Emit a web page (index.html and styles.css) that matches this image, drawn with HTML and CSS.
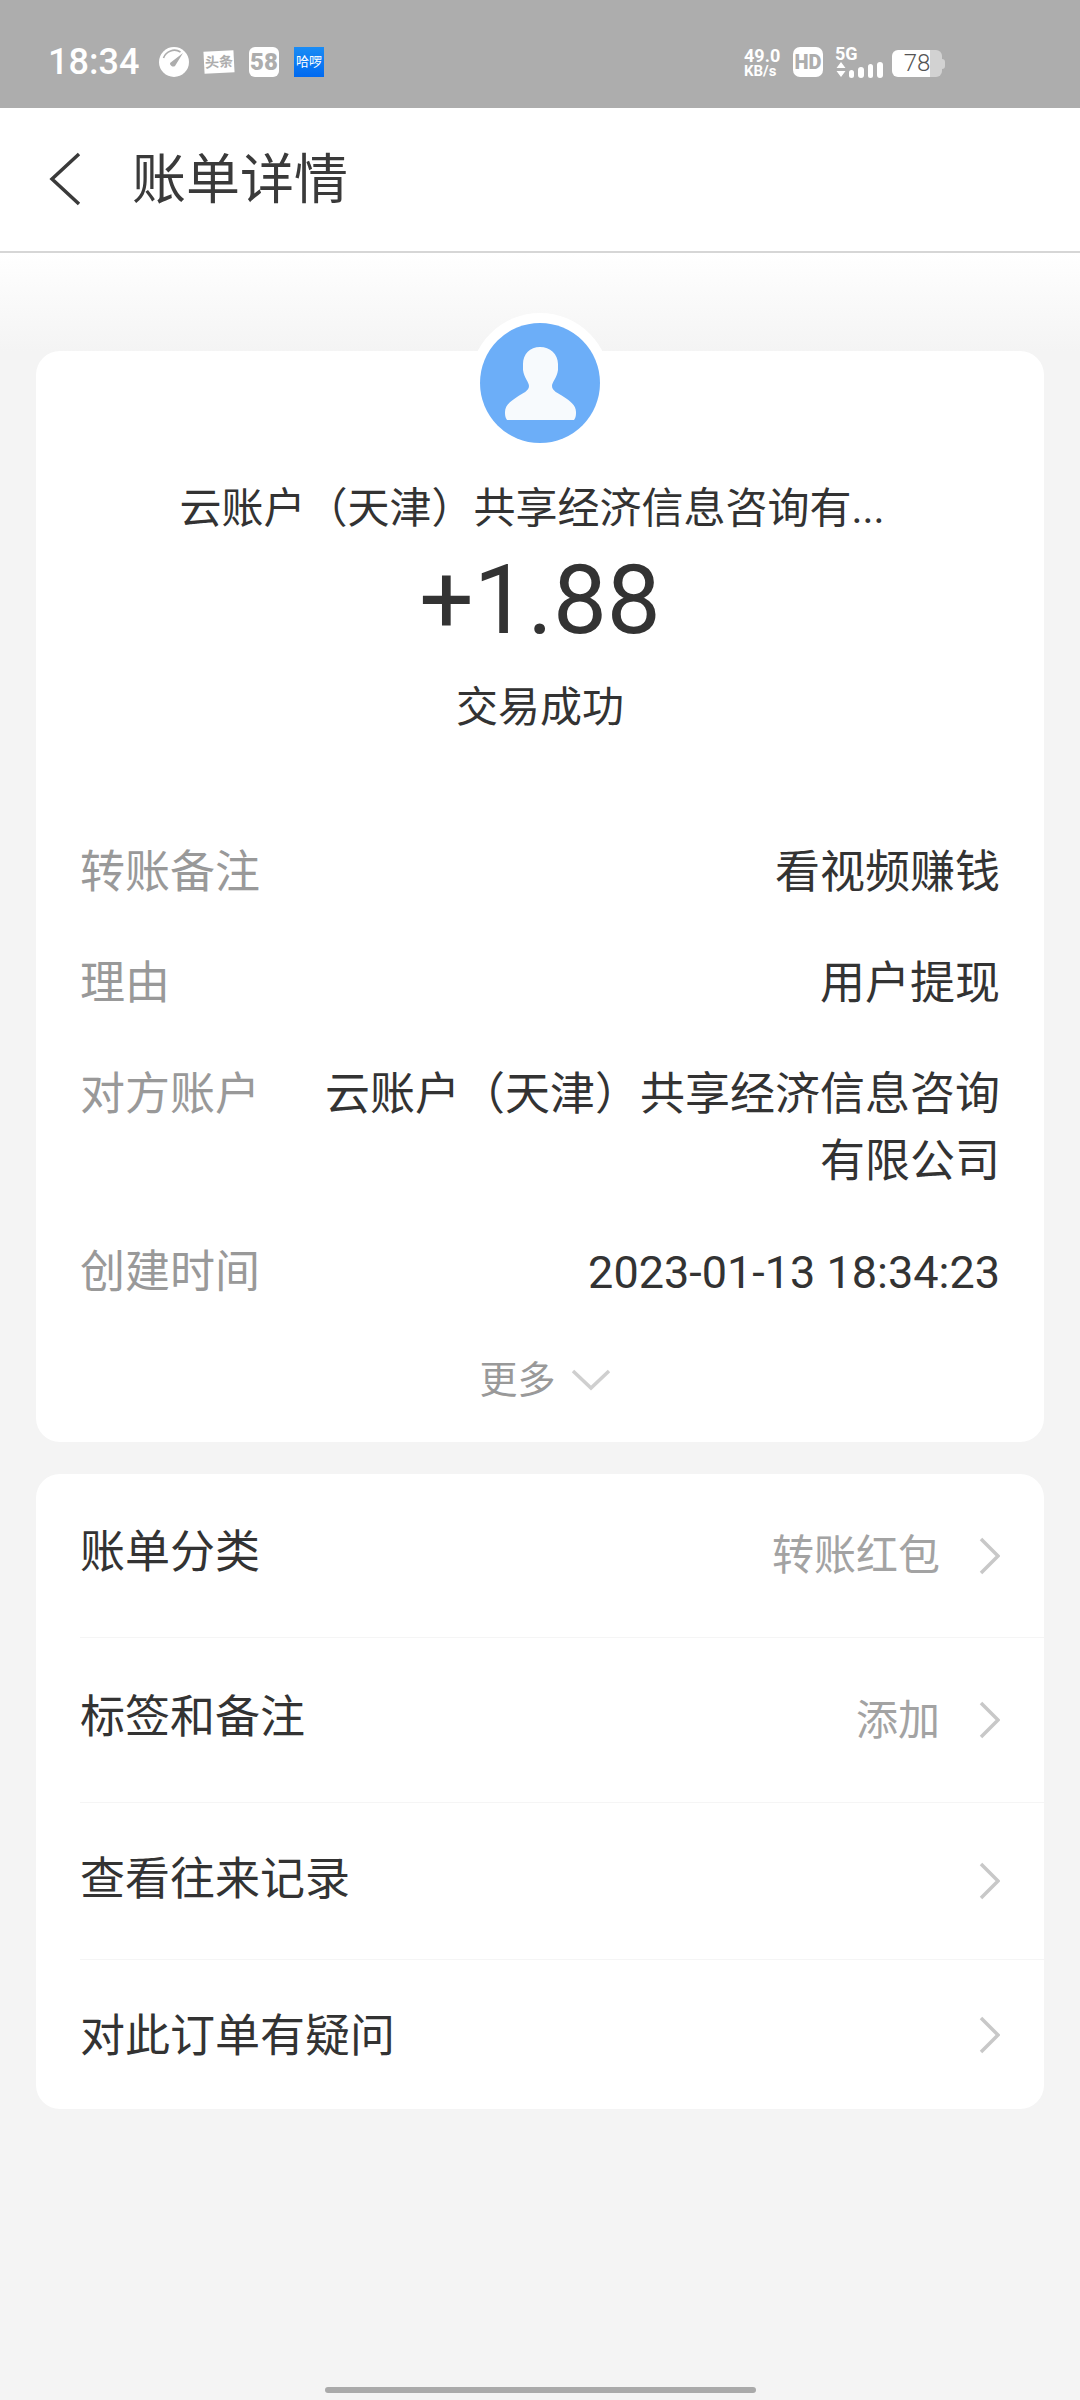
FILE: index.html
```html
<!DOCTYPE html>
<html lang="zh-CN">
<head>
    <meta charset="UTF-8">
    <meta name="viewport" content="width=device-width, initial-scale=1.0">
    <title>账单详情</title>
    <link rel="stylesheet" href="styles.css">
</head>
<body>
    <!-- Status bar -->
    <div class="status-bar">
        <div class="status-left">
            <span class="clock">18:34</span>
            <svg class="gauge" width="30" height="30" viewBox="0 0 30 30">
                <circle cx="15" cy="15" r="15" fill="#fff"/>
                <path d="M4.500 11a11.500 11.500 0 0 1 17-6" fill="none" stroke="#adadad" stroke-width="1.6"/>
                <path d="M11 16L24 6l-8 13a3.200 3.200 0 0 1-5-3z" fill="#adadad"/>
            </svg>
            <span class="toutiao">头条</span>
            <span class="app-58">58</span>
            <span class="hello">哈啰</span>
        </div>
        <div class="status-right">
            <div class="speed">
                <span class="speed-num">49.0</span>
                <span class="speed-unit">KB/s</span>
            </div>
            <span class="hd">HD</span>
            <div class="signal">
                <span class="signal-5g">5G</span>
                <svg width="47" height="16" viewBox="0 0 47 16">
                    <path d="M5 0l4.500 6H.5zM.5 9h9L5 15z" fill="#fff"/>
                    <rect x="13" y="8" width="5" height="8" rx="2.500" fill="#fff"/>
                    <rect x="22" y="5" width="6" height="11" rx="3" fill="#fff"/>
                    <rect x="32" y="2" width="5" height="14" rx="2.500" fill="#fff"/>
                    <rect x="41" y="0" width="6" height="16" rx="3" fill="#fff"/>
                </svg>
            </div>
            <div class="battery">
                <div class="battery-body"><span class="battery-level">78</span></div>
                <div class="battery-tip"></div>
            </div>
        </div>
    </div>

    <!-- Header -->
    <div class="top-nav">
        <svg class="back" width="34" height="54" viewBox="0 0 34 54">
            <path d="M30 2L3 27l27 25" fill="none" stroke="#3a3a3a" stroke-width="3.500"/>
        </svg>
        <h1>账单详情</h1>
    </div>

    <div class="content">
        <div class="card summary">
            <div class="avatar">
                <svg width="120" height="120" viewBox="0 0 120 120">
                    <circle cx="60" cy="60" r="60" fill="#6caef8"/>
                    <path d="M27 97c-2-3-2-5-2-8 0-7 6-11 12-15 6-4 12-6 12-11 0-4-5-8-6-16v-6c0-10 7-17 17-17s18 7 18 17v6c-1 8-6 12-6 16 0 5 6 7 12 11 6 4 12 8 12 15 0 3 0 5-2 8z" fill="#f7fafd"/>
                </svg>
            </div>
            <div class="payee">云账户（天津）共享经济信息咨询有...</div>
            <div class="amount">+1.88</div>
            <div class="trade-status">交易成功</div>

            <div class="info-row info-first">
                <span class="info-label">转账备注</span>
                <span class="info-value">看视频赚钱</span>
            </div>
            <div class="info-row">
                <span class="info-label">理由</span>
                <span class="info-value">用户提现</span>
            </div>
            <div class="info-row">
                <span class="info-label">对方账户</span>
                <span class="info-value">云账户（天津）共享经济信息咨询有限公司</span>
            </div>
            <div class="info-row">
                <span class="info-label">创建时间</span>
                <span class="info-value">2023-01-13 18:34:23</span>
            </div>
            <div class="more">
                <span>更多</span>
                <svg width="40" height="24" viewBox="0 0 40 24">
                    <path d="M2 3l18 17L38 3" fill="none" stroke="#cfcfcf" stroke-width="3.500"/>
                </svg>
            </div>
        </div>

        <div class="card menu">
            <div class="menu-row row-class">
                <span class="menu-title">账单分类</span>
                <span class="menu-value">转账红包</span>
                <svg class="arrow" width="22" height="38" viewBox="0 0 22 38"><path d="M3 2l17 17L3 36" fill="none" stroke="#c8c8c8" stroke-width="3.500"/></svg>
            </div>
            <div class="menu-row row-tag">
                <span class="menu-title">标签和备注</span>
                <span class="menu-value">添加</span>
                <svg class="arrow" width="22" height="38" viewBox="0 0 22 38"><path d="M3 2l17 17L3 36" fill="none" stroke="#c8c8c8" stroke-width="3.500"/></svg>
            </div>
            <div class="menu-row row-history">
                <span class="menu-title">查看往来记录</span>
                <svg class="arrow" width="22" height="38" viewBox="0 0 22 38"><path d="M3 2l17 17L3 36" fill="none" stroke="#c8c8c8" stroke-width="3.500"/></svg>
            </div>
            <div class="menu-row row-question">
                <span class="menu-title">对此订单有疑问</span>
                <svg class="arrow" width="22" height="38" viewBox="0 0 22 38"><path d="M3 2l17 17L3 36" fill="none" stroke="#c8c8c8" stroke-width="3.500"/></svg>
            </div>
        </div>
    </div>

    <div class="home-bar"></div>
</body>
</html>
```

FILE: styles.css
```css
/* Page */
html, body {
    height: 2400px;
}

body {
    margin: 0;
    width: 1080px;
    overflow: hidden;
    position: relative;
    background-color: #f4f4f4;
    color: #333333;
    font-family: Roboto, "Noto Sans CJK SC", sans-serif;
}

/* Status bar */
.status-bar {
    height: 108px;
    box-sizing: border-box;
    padding: 47px 135px 0 48px;
    background-color: #adadad;
    display: flex;
    justify-content: space-between;
    color: #ffffff;
}

.status-left,
.status-right {
    display: flex;
    align-items: flex-start;
}

.clock {
    font-size: 36px;
    line-height: 30px;
    font-weight: 500;
    width: 111px;
}

.gauge {
    margin-right: 15px;
}

.toutiao {
    width: 30px;
    height: 22px;
    margin: 4px 15px 0 0;
    background-color: #ffffff;
    color: #adadad;
    font-size: 14px;
    line-height: 22px;
    font-weight: 700;
    text-align: center;
    transform: rotate(-3deg);
    white-space: nowrap;
}

.app-58 {
    width: 30px;
    height: 30px;
    margin-right: 15px;
    border-radius: 6px;
    background-color: #ffffff;
    color: #adadad;
    font-size: 24px;
    line-height: 30px;
    font-weight: 900;
    text-align: center;
}

.hello {
    width: 30px;
    height: 30px;
    background: linear-gradient(to bottom, #1a8cf5, #0069f0);
    font-size: 13px;
    line-height: 30px;
    text-align: center;
    white-space: nowrap;
}

.speed {
    display: flex;
    flex-direction: column;
    align-items: flex-start;
    width: 36px;
    margin-right: 13px;
    font-weight: 700;
    white-space: nowrap;
}

.speed-num {
    font-size: 18px;
    line-height: 17px;
}

.speed-unit {
    font-size: 15px;
    line-height: 15px;
}

.hd {
    width: 30px;
    height: 30px;
    border-radius: 7px;
    background-color: #ffffff;
    color: #adadad;
    font-size: 20px;
    line-height: 30px;
    font-weight: 900;
    text-align: center;
    margin-right: 12px;
}

.signal {
    width: 47px;
    height: 30px;
    margin-right: 10px;
    position: relative;
}

.signal svg {
    position: absolute;
    left: 1px;
    top: 15px;
}

.signal-5g {
    position: absolute;
    left: 0;
    top: -1px;
    font-size: 18px;
    line-height: 15px;
    font-weight: 700;
}

.battery {
    display: flex;
    align-items: center;
    margin-top: 3px;
}

.battery-body {
    width: 50px;
    height: 27px;
    border-radius: 6px;
    background: linear-gradient(to right, #ffffff 76%, #d2d2d2 76%);
}

.battery-level {
    display: block;
    text-align: center;
    color: #555555;
    font-size: 24px;
    line-height: 27px;
    font-weight: 300;
}

.battery-tip {
    width: 3px;
    height: 10px;
    background-color: #d2d2d2;
    border-radius: 0 3px 3px 0;
}

/* Header */
.top-nav {
    height: 145px;
    box-sizing: border-box;
    background-color: #ffffff;
    border-bottom: 2px solid #d6d6d6;
    display: flex;
    align-items: center;
    padding-left: 49px;
}

.back {
    margin: 0 49px 2px 0;
}

h1 {
    margin: 0 0 9px;
    font-size: 54px;
    font-weight: 400;
    color: #3a3a3a;
}

/* Cards */
.content {
    padding: 98px 36px 0;
    background: linear-gradient(to bottom, #ffffff 0, #f4f4f4 98px);
    background-repeat: no-repeat;
}

.card {
    background-color: #ffffff;
    border-radius: 24px;
    box-sizing: border-box;
}

.summary {
    height: 1091px;
    padding: 0 44px;
    position: relative;
    text-align: center;
}

.avatar {
    position: absolute;
    left: 434px;
    top: -38px;
    width: 120px;
    height: 120px;
    padding: 10px;
    border-radius: 50%;
    background-color: #ffffff;
    line-height: 0;
}

.payee {
    padding: 130px 16px 0 0;
    font-size: 42px;
    line-height: 56px;
}

.amount {
    font-size: 96px;
    line-height: 104px;
    margin-top: 11px;
}

.trade-status {
    font-size: 42px;
    line-height: 56px;
    margin-top: 28px;
}

.info-row {
    display: flex;
    justify-content: space-between;
    align-items: flex-start;
    margin-top: 44px;
    font-size: 45px;
    line-height: 67px;
}

.info-first {
    margin-top: 103px;
}

.info-label {
    color: #999999;
    flex: none;
    width: 240px;
    text-align: left;
}

.info-value {
    text-align: right;
    color: #333333;
}

.more {
    margin-top: 42px;
    padding-left: 10px;
    display: flex;
    justify-content: center;
    align-items: center;
    gap: 15px;
    color: #999999;
    font-size: 38px;
    line-height: 64px;
}

/* Menu card */
.menu {
    margin-top: 32px;
}

.menu-row {
    display: flex;
    align-items: center;
    margin-left: 44px;
    padding-right: 44px;
    border-bottom: 1px solid #f5f5f5;
    box-sizing: border-box;
    font-size: 45px;
}

.row-class {
    height: 164px;
}

.row-tag {
    height: 165px;
}

.row-history {
    height: 157px;
}

.row-question {
    height: 149px;
    border-bottom: none;
}

.menu-title {
    flex: 1;
    margin-bottom: 14px;
}

.row-history .menu-title {
    margin-bottom: 11px;
}

.row-question .menu-title {
    margin-bottom: 5px;
}

.menu-value {
    color: #a3a3a3;
    font-size: 42px;
    margin-bottom: 8px;
}

.arrow {
    margin-left: 38px;
}

/* Home indicator */
.home-bar {
    position: absolute;
    left: 325px;
    top: 2387px;
    width: 431px;
    height: 6px;
    border-radius: 3px;
    background-color: #aaaaaa;
}
```
